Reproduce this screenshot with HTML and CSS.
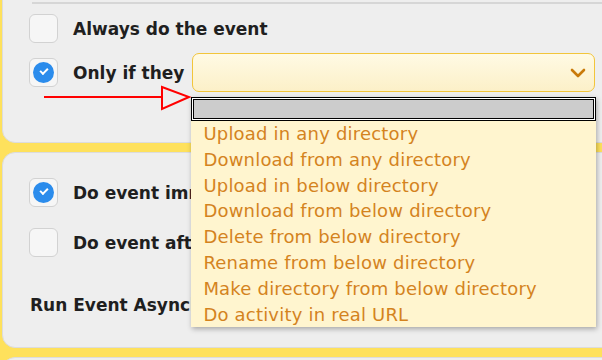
FILE: index.html
```html
<!DOCTYPE html>
<html lang="en">
<head>
    <meta charset="UTF-8">
    <title>Event Settings</title>
    <link rel="stylesheet" href="styles.css">
</head>
<body>
    <section class="panel panel-first">
        <div class="divider"></div>
        <div class="row">
            <span class="check"></span>
            <span class="label">Always do the event</span>
        </div>
        <div class="row">
            <span class="check checked"></span>
            <span class="label">Only if they</span>
            <div class="select-wrap">
                <div class="select">
                    <svg class="chevron" width="16" height="10" viewBox="0 0 16 10">
                        <path d="M2 2 L8 8 L14 2" fill="none" stroke="#c97a0a" stroke-width="2.6" stroke-linecap="round" stroke-linejoin="round"/>
                    </svg>
                </div>
                <ul class="listbox">
                    <li class="current"></li>
                    <li>Upload in any directory</li>
                    <li>Download from any directory</li>
                    <li>Upload in below directory</li>
                    <li>Download from below directory</li>
                    <li>Delete from below directory</li>
                    <li>Rename from below directory</li>
                    <li>Make directory from below directory</li>
                    <li>Do activity in real URL</li>
                </ul>
            </div>
        </div>
        <svg class="arrow" width="150" height="28" viewBox="0 0 150 28">
            <line x1="0" y1="12" x2="118" y2="12" stroke="#ff0000" stroke-width="2"/>
            <polygon points="118,2 118,24 145,12" fill="none" stroke="#ff0000" stroke-width="2"/>
        </svg>
    </section>

    <section class="panel panel-second">
        <div class="row">
            <span class="check checked"></span>
            <span class="label">Do event immediately</span>
        </div>
        <div class="row">
            <span class="check"></span>
            <span class="label">Do event after</span>
        </div>
        <div class="run-label">Run Event Asynchronously</div>
    </section>

    <section class="panel panel-third"></section>
</body>
</html>
```

FILE: styles.css
```css
body {
    margin: 0;
    background-color: #fee15c;
    font-family: "DejaVu Sans", Tahoma, sans-serif;
    color: #1f1f1f;
    overflow: hidden;
}
.panel {
    position: relative;
    background-color: #eeeeee;
    border: 1px solid #dcdcdc;
    border-radius: 13px;
    margin: 0 -30px 9px 2px;
    padding: 0 0 0 26px;
}
.panel-first {
    margin-top: -20px;
    padding-top: 21px;
    height: 163px;
    box-sizing: border-box;
    z-index: 2;
}
.panel-second {
    height: 196px;
    box-sizing: border-box;
    padding-top: 25px;
}
.panel-third {
    height: 60px;
}
.divider {
    height: 0;
    border-top: 2px solid #d6d6d6;
    margin: 0 0 10px 3px;
}
.row {
    display: flex;
    align-items: center;
    height: 29px;
    margin-bottom: 15px;
}
.panel-second .row {
    margin-bottom: 21px;
}
.check {
    flex: none;
    position: relative;
    width: 27px;
    height: 27px;
    border: 1px solid #d2d2d2;
    border-radius: 6px;
    background-color: #f6f6f6;
    box-sizing: content-box;
}
.check.checked::before {
    content: "";
    position: absolute;
    left: 3px;
    top: 3px;
    width: 21px;
    height: 21px;
    border-radius: 50%;
    background-color: #2b8cec;
}
.check.checked::after {
    content: "";
    position: absolute;
    left: 10px;
    top: 9px;
    width: 6px;
    height: 3px;
    border-left: 2.5px solid #fff;
    border-bottom: 2.5px solid #fff;
    transform: rotate(-45deg);
}
.label {
    margin-left: 15px;
    font-size: 17px;
    font-weight: bold;
    white-space: nowrap;
}
.select-wrap {
    position: relative;
    margin-left: 8px;
    width: 403px;
    height: 39px;
    flex: none;
}
.select {
    height: 100%;
    box-sizing: border-box;
    border: 1.5px solid #f2c53a;
    border-radius: 7px;
    background: linear-gradient(#fffae4, #fcf0c8);
    display: flex;
    align-items: center;
    justify-content: flex-end;
    padding-right: 8px;
}
.listbox {
    position: absolute;
    left: -1px;
    top: 44px;
    width: 405px;
    margin: 0;
    padding: 0;
    list-style: none;
    background-color: #fff5cf;
    box-shadow: 1px 2px 5px rgba(0, 0, 0, 0.3);
    z-index: 5;
}
.listbox li {
    height: 25.8px;
    line-height: 25.8px;
    padding-left: 12px;
    font-size: 18px;
    letter-spacing: 0.2px;
    color: #d4831e;
    white-space: nowrap;
}
.listbox li.current {
    height: 24px;
    box-sizing: border-box;
    background-color: #cccccc;
    border: 1px solid #000;
    box-shadow: inset 0 0 0 1px #fff, inset 0 0 0 2px #000;
}
.arrow {
    position: absolute;
    left: 41px;
    top: 104px;
}
.run-label {
    margin-top: 38px;
    font-size: 17px;
    font-weight: bold;
    margin-left: 1px;
}
```
